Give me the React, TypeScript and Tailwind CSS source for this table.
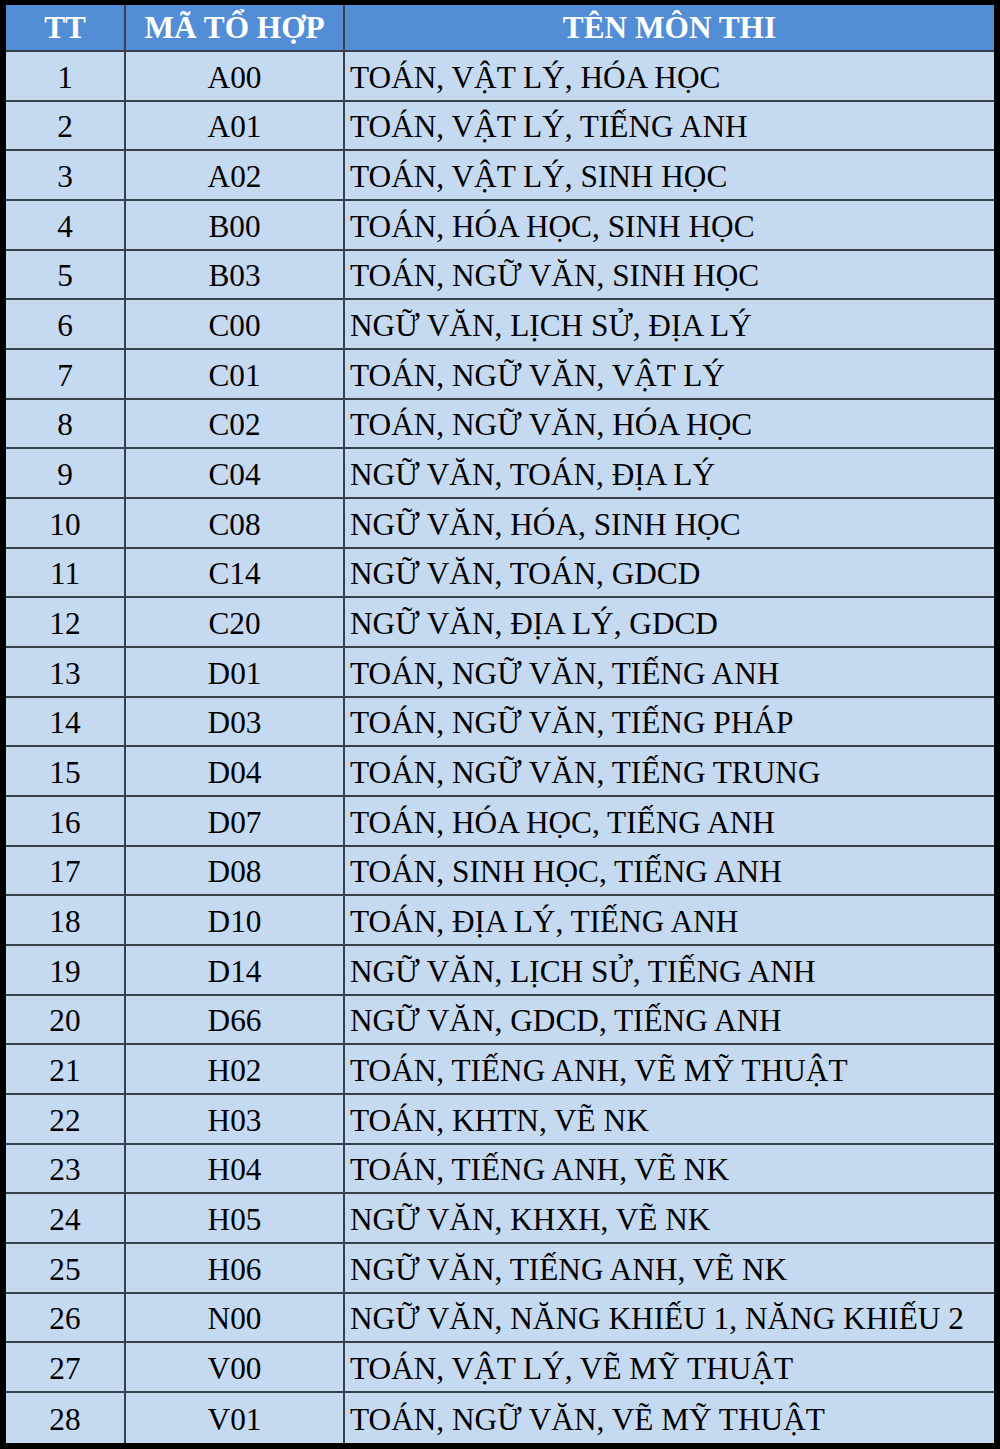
import React from "react";

const rows: [string, string][] = [
  ["A00", "TOÁN, VẬT LÝ, HÓA HỌC"],
  ["A01", "TOÁN, VẬT LÝ, TIẾNG ANH"],
  ["A02", "TOÁN, VẬT LÝ, SINH HỌC"],
  ["B00", "TOÁN, HÓA HỌC, SINH HỌC"],
  ["B03", "TOÁN, NGỮ VĂN, SINH HỌC"],
  ["C00", "NGỮ VĂN, LỊCH SỬ, ĐỊA LÝ"],
  ["C01", "TOÁN, NGỮ VĂN, VẬT LÝ"],
  ["C02", "TOÁN, NGỮ VĂN, HÓA HỌC"],
  ["C04", "NGỮ VĂN, TOÁN, ĐỊA LÝ"],
  ["C08", "NGỮ VĂN, HÓA, SINH HỌC"],
  ["C14", "NGỮ VĂN, TOÁN, GDCD"],
  ["C20", "NGỮ VĂN, ĐỊA LÝ, GDCD"],
  ["D01", "TOÁN, NGỮ VĂN, TIẾNG ANH"],
  ["D03", "TOÁN, NGỮ VĂN, TIẾNG PHÁP"],
  ["D04", "TOÁN, NGỮ VĂN, TIẾNG TRUNG"],
  ["D07", "TOÁN, HÓA HỌC, TIẾNG ANH"],
  ["D08", "TOÁN, SINH HỌC, TIẾNG ANH"],
  ["D10", "TOÁN, ĐỊA LÝ, TIẾNG ANH"],
  ["D14", "NGỮ VĂN, LỊCH SỬ, TIẾNG ANH"],
  ["D66", "NGỮ VĂN, GDCD, TIẾNG ANH"],
  ["H02", "TOÁN, TIẾNG ANH, VẼ MỸ THUẬT"],
  ["H03", "TOÁN, KHTN, VẼ NK"],
  ["H04", "TOÁN, TIẾNG ANH, VẼ NK"],
  ["H05", "NGỮ VĂN, KHXH, VẼ NK"],
  ["H06", "NGỮ VĂN, TIẾNG ANH, VẼ NK"],
  ["N00", "NGỮ VĂN, NĂNG KHIẾU 1, NĂNG KHIẾU 2"],
  ["V00", "TOÁN, VẬT LÝ, VẼ MỸ THUẬT"],
  ["V01", "TOÁN, NGỮ VĂN, VẼ MỸ THUẬT"],
];

export default function App() {
  return (
    <div
      className="w-[1000px] h-[1449px] bg-black pl-[6px] pt-[5px]"
      style={{ fontFamily: '"Liberation Serif", "Times New Roman", serif' }}
    >
      <div className="w-[988px] flex flex-col">
        <div className="grid grid-cols-[120px_219px_649px] h-[47px] bg-[#538dd5] text-white font-bold text-[31.3px] leading-none">
          <div className="flex items-center justify-center border-r-2 border-b-2 border-[#38414b]">TT</div>
          <div className="flex items-center justify-center border-r-2 border-b-2 border-[#38414b]">MÃ TỔ HỢP</div>
          <div className="flex items-center justify-center border-b-2 border-[#38414b]">TÊN MÔN THI</div>
        </div>
        {rows.map(([code, name], i) => {
          const last = i === rows.length - 1;
          return (
            <div
              key={code}
              className={
                "grid grid-cols-[120px_219px_649px] h-[49.68px] bg-[#c5d9f1] text-black text-[31.3px] leading-none " +
                (last ? "" : "border-b-2 border-[#38414b]")
              }
            >
              <div className="flex items-center justify-center pt-[3px] border-r-2 border-[#38414b]">{i + 1}</div>
              <div className="flex items-center justify-center pt-[3px] border-r-2 border-[#38414b]">{code}</div>
              <div className="flex items-center pl-[5px] pt-[3px] whitespace-nowrap">{name}</div>
            </div>
          );
        })}
      </div>
    </div>
  );
}
